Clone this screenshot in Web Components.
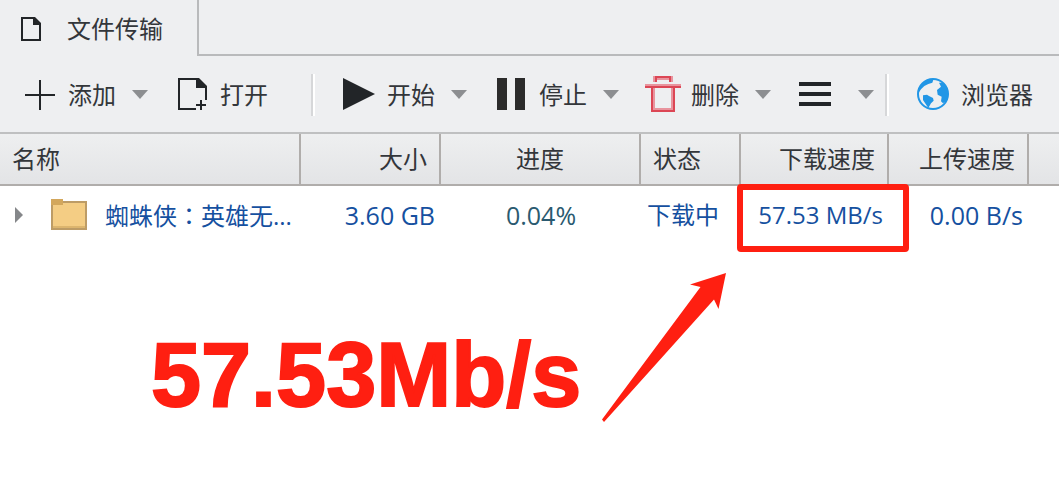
<!DOCTYPE html>
<html lang="zh-CN">
<head>
<meta charset="utf-8">
<title>文件传输</title>
<style>
html, body { margin: 0; background: #fff; }
body { font: 24px/32px "Open Sans", "Noto Sans CJK SC", sans-serif; color: #33363a; }
</style>
</head>
<body>
<transfer-app></transfer-app>
<script>
const reset = `
  * { box-sizing: border-box; }
  button { font: inherit; color: inherit; background: none; border: 0; padding: 0; margin: 0; cursor: pointer; text-align: left; white-space: nowrap; }
  svg { display: block; overflow: visible; flex: none; }
`;
function define(name, html) {
  customElements.define(name, class extends HTMLElement {
    constructor() {
      super();
      const t = document.createElement('template');
      t.innerHTML = `<style>${reset}</style>` + (typeof html === 'function' ? html(this) : html);
      this.attachShadow({ mode: 'open' }).append(t.content.cloneNode(true));
    }
  });
}

const icons = {
  add: `<svg width="32" height="32"><path d="M16 2v30M1 17h30" stroke="#222528" stroke-width="2" fill="none"/></svg>`,
  open: `<svg width="32" height="32"><path d="M20 31H3V1h20" stroke="#222528" stroke-width="2" fill="none"/><path d="M20 0h3l8 8v2H20z" fill="#222528"/><path d="M30 8v14M25 22v10M20 27h10" stroke="#222528" stroke-width="2"/></svg>`,
  play: `<svg width="32" height="32"><path d="M0 0L32 16L0 32z" fill="#222528"/></svg>`,
  pause: `<svg width="32" height="32"><path d="M2 0h10v32H2zM20 0h10v32H20z" fill="#2b2b2b"/></svg>`,
  remove: `<svg width="32" height="32"><path fill="#e8949e" d="M6-2h2v6H6zM24-2h2v6h-2zM10 0h12v2H10zM-2 6h36v2H-2zM6 10h2v22H6zM24 10h2v22h-2zM8 30h16v2H8z"/><path fill="#dc4655" d="M8-2h16v2H8zM8 0h2v4H8zM22 0h2v4h-2zM-2 8h36v2H-2zM4 10h2v24H4zM26 10h2v24h-2zM6 32h20v2H6z"/></svg>`,
  menu: `<svg width="32" height="32"><path d="M0 6h32M0 16h32M0 26h32" stroke="#222528" stroke-width="4"/></svg>`,
  globe: `<svg width="32" height="32" viewBox="0 0 96 96"><circle cx="48" cy="48" r="45" fill="none" stroke="#2196e6" stroke-width="6"/><path fill="#2196e6" d="M28 6L16 18L6 30L4 46L12 34L22 24L34 18L46 14L50 3ZM18 52L30 50L36 54L48 60L50 68L42 76L34 90L26 78L18 66ZM60 36L72 26L66 14L76 14L90 28L94 50L88 68L78 76L72 70L74 56L62 50Z"/></svg>`,
};
const caret = `<svg width="20" height="8"><path d="M2 0h16L10 9z" fill="#8c8e91"/></svg>`;

define('tool-button', el => `
  <style>
    :host { display: flex; align-items: center; flex: none; }
    .main { display: flex; align-items: center; height: 32px; gap: 12px; }
    .label { padding-top: 2px; }
    .more { display: flex; align-items: center; height: 32px; margin-left: 14px; }
    :host([compact]) .more { margin-left: 25px; }
    :host([compact]) .label { display: none; }
  </style>
  <button class="main" ${el.hasAttribute('compact') ? 'aria-label="菜单"' : ''}>${icons[el.getAttribute('icon')]}<span class="label"><slot></slot></span></button>
  ${el.hasAttribute('split') ? `<button class="more" aria-label="更多选项">${caret}</button>` : ''}
`);

define('tab-strip', `
  <style>
    :host { display: flex; height: 56px; background: #eeeff1; }
    button { display: flex; align-items: center; gap: 24px; flex: none; width: 197px; padding: 2px 0 0 19px; }
    .rest { flex: 1; border-left: 2px solid #b9babc; border-bottom: 2px solid #b9babc; }
  </style>
  <button role="tab" aria-selected="true">
    <svg width="24" height="24"><path d="M14 1H3v22h18V8" fill="none" stroke="#222528" stroke-width="2"/><path d="M14 0h2l6 6v2h-8z" fill="#222528"/></svg>
    文件传输
  </button>
  <div class="rest"></div>
`);

define('tool-bar', `
  <style>
    :host { display: flex; align-items: center; height: 78px; padding: 0 24px; background: #eeeff1; border-bottom: 2px solid #bfc0c1; overflow: hidden; }
    .group { display: flex; gap: 26px; flex: none; }
    .files { padding-right: 43px; }
    .jobs { padding-right: 9px; }
    .sep { width: 4px; height: 42px; flex: none; margin: 2px 28px 0 0; border-left: 2px solid #d6d7d9; border-right: 2px solid #fff; }
  </style>
  <div class="group files">
    <tool-button icon="add" split>添加</tool-button>
    <tool-button icon="open">打开</tool-button>
  </div>
  <div class="sep"></div>
  <div class="group jobs">
    <tool-button icon="play" split>开始</tool-button>
    <tool-button icon="pause" split>停止</tool-button>
    <tool-button icon="remove" split>删除</tool-button>
    <tool-button icon="menu" split compact></tool-button>
  </div>
  <div class="sep"></div>
  <div class="group"><tool-button icon="globe">浏览器</tool-button></div>
`);

define('transfer-table', `
  <style>
    :host { display: block; }
    table { width: 100%; table-layout: fixed; border-collapse: separate; border-spacing: 0; }
    th { height: 52px; padding: 0 12px; font-weight: 400; text-align: left; white-space: nowrap; background: linear-gradient(#eeeff0, #e3e4e6); border-right: 2px solid #b0adab; border-bottom: 2px solid #b0adab; }
    th:last-child { border-right: 0; }
    td { height: 60px; padding: 0 6px 2px; color: #1550a0; white-space: nowrap; }
    .num { text-align: right; }
    .mid { text-align: center; }
    td.num, td.mid { font-size: 25px; }
    td.mid { color: #2a5a70; }
    .file { display: flex; align-items: center; padding-left: 8px; }
    .folder { margin-left: 13px; }
    .name { margin-left: 18px; }
    .colon { font-family: "Noto Sans CJK TC", sans-serif; }
    td.speed { position: relative; font-size: 24px; }
    .mark { position: absolute; inset: -2px -20px -6px -4px; border: 6px solid #ff1f11; border-radius: 4px; }
  </style>
  <table>
    <colgroup><col style="width:301px"><col style="width:140px"><col style="width:200px"><col style="width:100px"><col style="width:148px"><col style="width:140px"><col></colgroup>
    <thead><tr><th>名称</th><th class="num">大小</th><th class="mid">进度</th><th>状态</th><th class="num">下载速度</th><th class="num">上传速度</th><th></th></tr></thead>
    <tbody><tr>
      <td><div class="file">
        <button aria-label="展开"><svg width="24" height="16"><path d="M1 0L9 8L1 16z" fill="#85878a"/></svg></button>
        <svg class="folder" width="36" height="32"><path d="M1 30V3h34v27z" fill="#f4cd84" stroke="#bd9c66" stroke-width="2"/><path d="M0 0h12v6H0z" fill="#d3a75c"/><path d="M2 27h32v2H2z" fill="#dcb56e"/></svg>
        <span class="name">蜘蛛侠<span class="colon" lang="zh-TW">：</span>英雄无...</span>
      </div></td>
      <td class="num">3.60 GB</td>
      <td class="mid">0.04%</td>
      <td>下载中</td>
      <td class="num speed">57.53 MB/s<span class="mark"></span></td>
      <td class="num">0.00 B/s</td>
      <td></td>
    </tr></tbody>
  </table>
`);

define('speed-note', `
  <style>
    :host { display: flex; align-items: flex-start; gap: 19px; padding: 24px 0 0 151px; color: #ff1f11; }
    strong { font: bold 90px/100px "Liberation Sans", sans-serif; -webkit-text-stroke: 2px #ff1f11; margin-top: 55px; white-space: nowrap; }
  </style>
  <strong>57.53Mb/s</strong>
  <svg width="128" height="154" viewBox="600 270 128 154" aria-hidden="true"><path fill="#ff1f11" d="M726 273L690 284.500L700.500 287L602 419.500L604 422L714 299.500L718.500 309Z"/></svg>
`);

define('transfer-app', `
  <style>:host { display: block; overflow: hidden; }</style>
  <tab-strip></tab-strip>
  <tool-bar></tool-bar>
  <transfer-table></transfer-table>
  <speed-note></speed-note>
`);
</script>
</body>
</html>
